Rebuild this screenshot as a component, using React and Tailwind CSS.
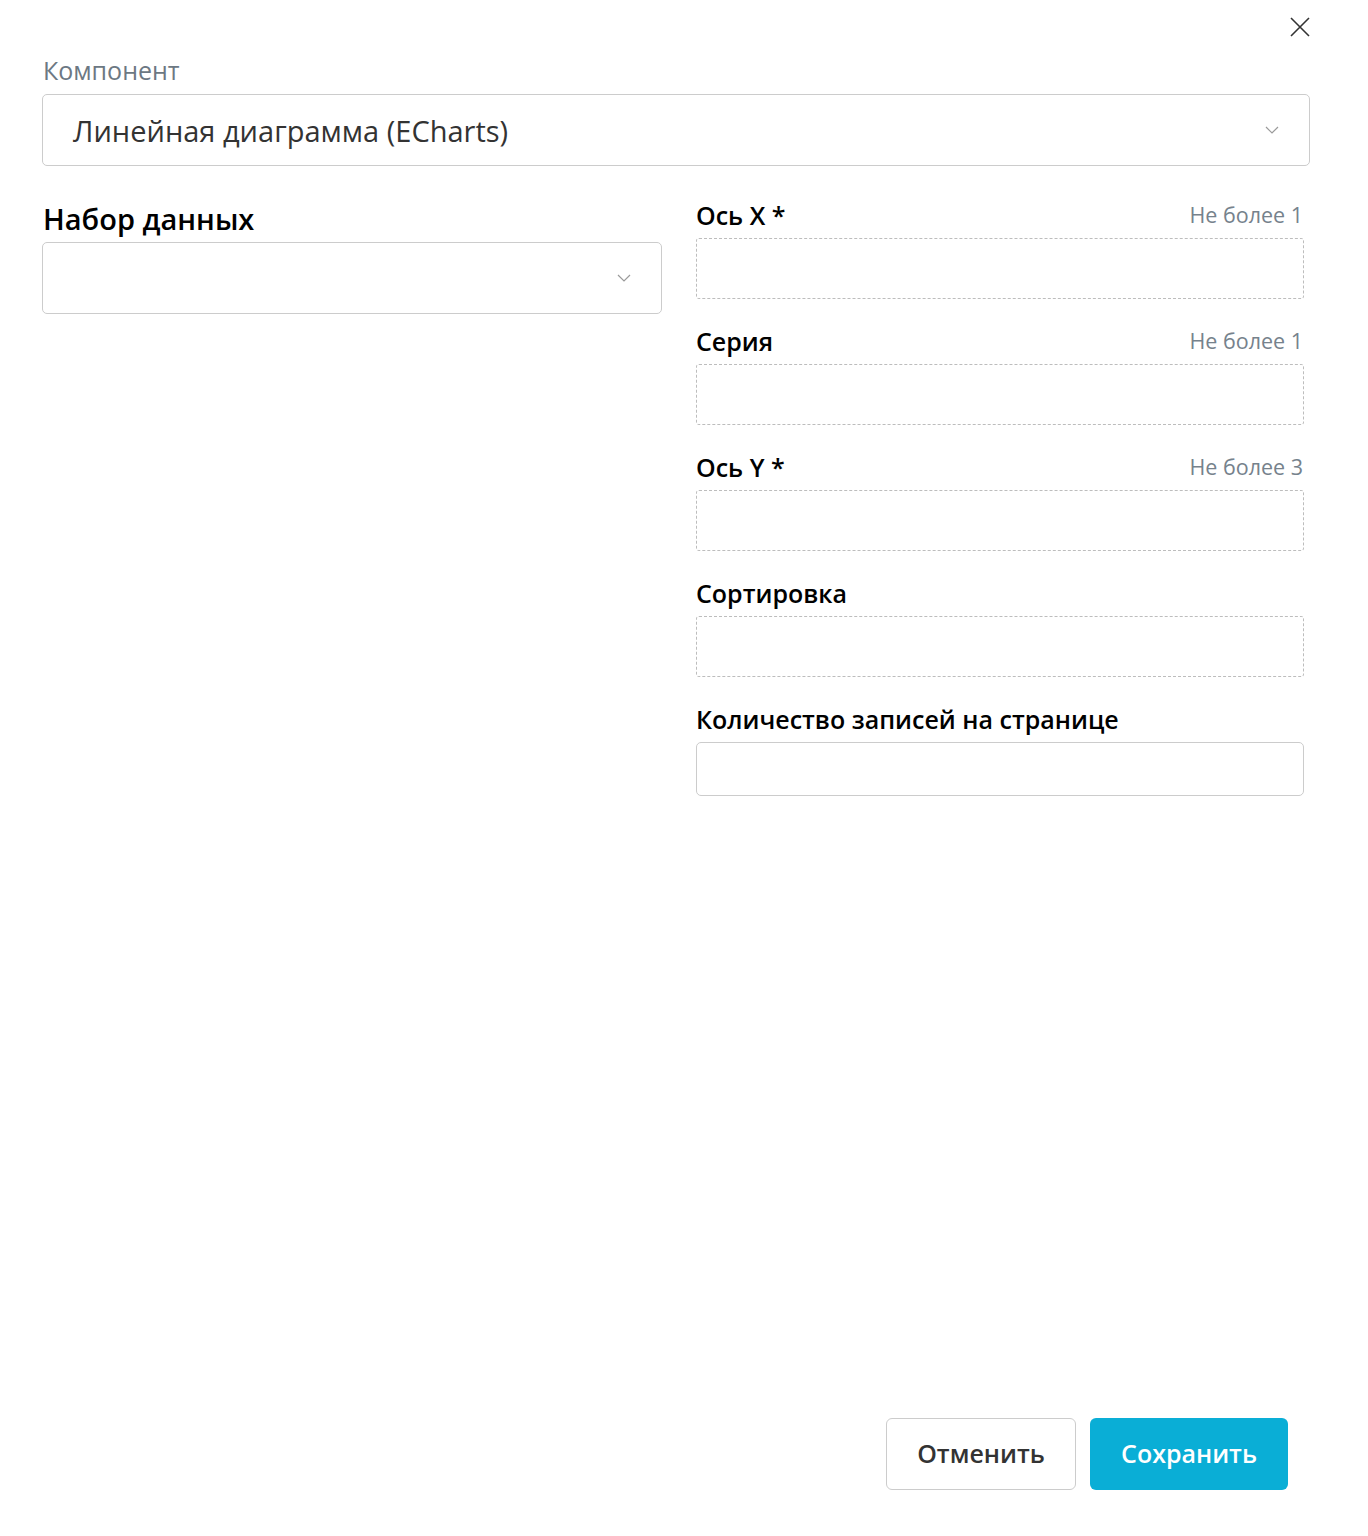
import { useState } from 'react';

function Chevron() {
  return (
    <svg width="14" height="8" viewBox="0 0 14 8" fill="none" className="shrink-0">
      <path d="M1 1l6 6 6-6" stroke="#9a9a9a" strokeWidth="1.2" />
    </svg>
  );
}

function Select({ value, className }) {
  return (
    <div
      className={`flex items-center justify-between h-[72px] border border-[#cccccc] rounded-[5px] bg-white ${className}`}
    >
      <span className="text-[29px] text-[#333333] leading-none">{value}</span>
      <Chevron />
    </div>
  );
}

function DropField({ label, limit }) {
  return (
    <div>
      <div className="flex items-end justify-between h-[26px] mb-[10px]">
        <span className="text-[25px] font-semibold text-black leading-none">{label}</span>
        {limit && (
          <span className="text-[21.5px] text-[#76828c] leading-none pr-[1px] mb-[3px]">{limit}</span>
        )}
      </div>
      <div className="h-[61px] border border-dashed border-[#bdbdbd] rounded-[3px]"></div>
    </div>
  );
}

export default function App() {
  const [component] = useState('Линейная диаграмма (ECharts)');

  const fields = [
    { label: 'Ось X *', limit: 'Не более 1' },
    { label: 'Серия', limit: 'Не более 1' },
    { label: 'Ось Y *', limit: 'Не более 3' },
    { label: 'Сортировка' },
  ];

  return (
    <div
      className="w-[1368px] h-[1536px] bg-white flex flex-col"
      style={{ fontFamily: '"Open Sans", "Noto Sans", sans-serif' }}
    >
      {/* Close */}
      <div className="flex justify-end pt-[16px] pr-[57px] h-[58px]">
        <svg width="22" height="22" viewBox="0 0 22 22" fill="none">
          <path d="M2 2l18 18M20 2L2 20" stroke="#333333" strokeWidth="1.6" />
        </svg>
      </div>

      <div className="px-[42px] pr-[58px]">
        <div className="text-[25px] text-[#6c7883] leading-none h-[36px] pl-[1px]">Компонент</div>
        <Select value={component} className="pl-[30px] pr-[30px]" />
      </div>

      <div className="flex pl-[42px] pt-[36px] gap-[34px]">
        {/* Left column */}
        <div className="w-[620px]">
          <div className="text-[29px] font-semibold text-black leading-none h-[40px] pt-[2px] pl-[1px]">
            Набор данных
          </div>
          <Select value="" className="pl-[31px] pr-[30px]" />
        </div>

        {/* Right column */}
        <div className="w-[608px] flex flex-col gap-[29px]">
          {fields.map((f) => (
            <DropField key={f.label} label={f.label} limit={f.limit} />
          ))}
          <div>
            <div className="flex items-end h-[26px] mb-[10px]">
              <span className="text-[25px] font-semibold text-black leading-none">
                Количество записей на странице
              </span>
            </div>
            <div className="h-[54px] border border-[#cccccc] rounded-[5px]"></div>
          </div>
        </div>
      </div>

      <div className="flex-1"></div>

      {/* Footer */}
      <div className="flex justify-end gap-[14px] pr-[80px] pb-[46px]">
        <button className="w-[190px] h-[72px] border border-[#cccccc] rounded-[6px] bg-white text-[25px] font-semibold text-[#333333]">
          Отменить
        </button>
        <button className="w-[198px] h-[72px] rounded-[6px] bg-[#0aaed6] text-[25px] font-semibold text-white">
          Сохранить
        </button>
      </div>
    </div>
  );
}
